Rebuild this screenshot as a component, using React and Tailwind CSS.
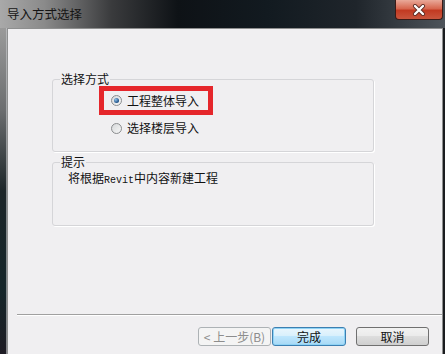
import React from "react";

const font = "font-['Noto_Sans_CJK_SC','Noto_Sans',sans-serif]";

const Radio = ({ checked }) => (
    <span className="w-[11px] h-[11px] rounded-full border border-[#8a8c8e] bg-[linear-gradient(135deg,#d6d8da,#f7f7f7)] flex items-center justify-center shrink-0">
        {checked && (
            <span className="w-[5px] h-[5px] rounded-full bg-[radial-gradient(circle_at_35%_35%,#8fc0e8,#1d4f86_70%)]" />
        )}
    </span>
);

const Button = ({ children, variant, className = "" }) => {
    let look = "border-[#707070] bg-[linear-gradient(#f2f2f2_0%,#ebebeb_45%,#dddddd_50%,#cfcfcf_100%)] text-[#111]";
    if (variant === "default") {
        look = "border-[#3c7fb1] bg-[linear-gradient(#eaf6fd_0%,#d9f0fc_45%,#bee6fd_50%,#a7d9f5_100%)] text-[#111] shadow-[inset_0_0_0_1px_#8fd3f5]";
    }
    if (variant === "disabled") {
        look = "border-[#adb2b5] bg-[#f4f4f4] text-[#8d8d8d]";
    }
    return (
        <div className={`h-[19px] rounded-[3px] border flex items-center justify-center text-[12px] leading-none ${look} ${className}`}>
            {children}
        </div>
    );
};

export default function App() {
    return (
        <div className={`w-[445px] h-[354px] overflow-hidden flex flex-col bg-[#1b1d20] ${font}`}>
            {/* title bar */}
            <div className="h-[28px] shrink-0 flex justify-between bg-[linear-gradient(90deg,#a9a9a9_0%,#8a8a8a_10%,#3a3b3d_25%,#0e1216_40%,#121a20_60%,#1f252b_80%,#4e545a_100%)]">
                <span className="pl-[7px] pt-[6px] text-[12.5px] leading-[16px] text-[#151515]">导入方式选择</span>
                <div className="mr-[2px] w-[48px] h-[20px] rounded-b-[4px] border border-t-0 border-[#3b1a16] bg-[linear-gradient(#e9a999_0%,#d7674f_45%,#c23a22_55%,#c9553d_100%)] flex items-center justify-center">
                    <svg width="14" height="12" viewBox="0 0 14 12">
                        <path d="M3 2 L11 10 M11 2 L3 10" stroke="#5a2a22" strokeWidth="4" strokeLinecap="round" />
                        <path d="M3 2 L11 10 M11 2 L3 10" stroke="#ffffff" strokeWidth="2.4" strokeLinecap="round" />
                    </svg>
                </div>
            </div>

            <div className="flex flex-1 min-h-0">
                {/* left frame */}
                <div className="w-[7px] shrink-0 bg-[linear-gradient(#9a9a9a_0%,#6c6e70_25%,#1d2629_50%,#15262a_80%,#1e1c24_100%)] flex justify-end">
                    <div className="w-px bg-[#c9cccf]/60" />
                </div>

                {/* client area */}
                <div className="flex-1 border border-b-0 border-[#8e8f8f] bg-[#f0eff1] flex flex-col text-[12px] text-[#111]">
                    <div className="h-[42px]" />
                    <fieldset className="ml-[44px] w-[322px] h-[81px] border border-[#d5d5d8] rounded-[3px] shadow-[1px_1px_0_#ffffff]">
                        <legend className="ml-[7px] px-px leading-[16px]">选择方式</legend>
                        <div className="ml-[46px] mt-[-1px] w-[114px] h-[29px] border-[5px] border-[#e5262b] flex items-center pl-[7px] gap-[5px]">
                            <Radio checked />
                            <span className="leading-[16px]">工程整体导入</span>
                        </div>
                        <div className="ml-[58px] mt-[5px] flex items-center gap-[5px]">
                            <Radio />
                            <span className="leading-[16px]">选择楼层导入</span>
                        </div>
                    </fieldset>

                    <fieldset className="mt-[2px] ml-[44px] w-[322px] h-[72px] border border-[#d5d5d8] rounded-[3px] shadow-[1px_1px_0_#ffffff]">
                        <legend className="ml-[7px] px-px leading-[16px]">提示</legend>
                        <p className="pl-[15px] leading-[16px]">
                            将根据<span className="font-['Liberation_Mono',monospace] text-[10px]">Revit</span>中内容新建工程
                        </p>
                    </fieldset>

                    <div className="mt-[88px] ml-[9px] h-[2px] border-t border-[#a0a0a0] bg-white" />

                    <div className="mt-[11px] flex">
                        <Button variant="disabled" className="ml-[190px] w-[73px]">&lt; 上一步(B)</Button>
                        <Button variant="default" className="ml-[1px] w-[74px]">完成</Button>
                        <Button className="ml-[10px] w-[73px]">取消</Button>
                    </div>
                </div>

                {/* right frame */}
                <div className="w-[2px] shrink-0 bg-[#1a1c1f]" />
            </div>
        </div>
    );
}
